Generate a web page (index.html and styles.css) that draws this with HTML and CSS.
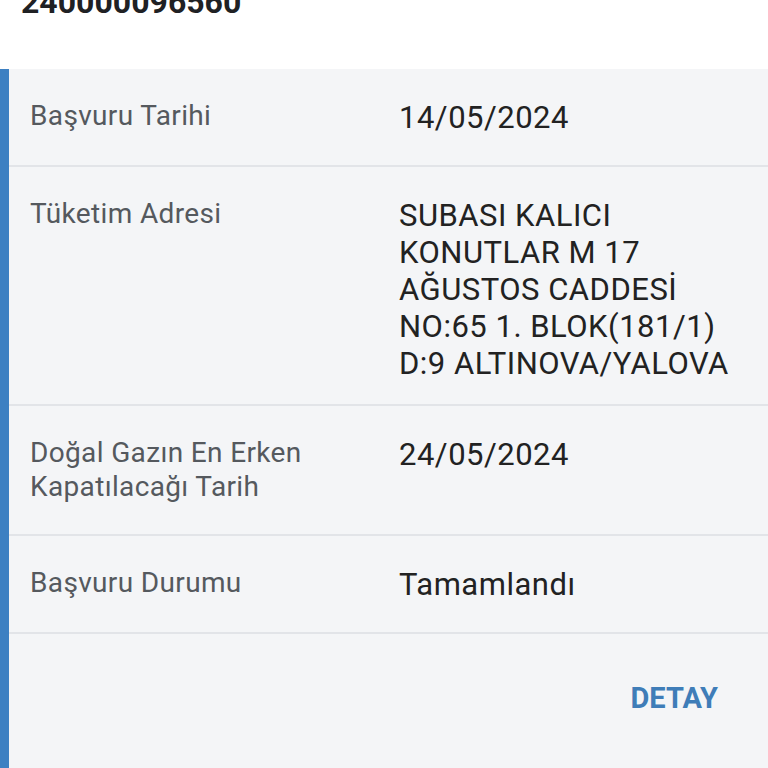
FILE: index.html
```html
<!DOCTYPE html>
<html lang="tr">
<head>
    <meta charset="UTF-8">
    <meta name="viewport" content="width=device-width, initial-scale=1.0">
    <title>Başvuru Detayı</title>
    <link rel="stylesheet" href="styles.css">
</head>
<body>
    <div class="header">
        <div class="app-no">240000096560</div>
    </div>

    <div class="card">
        <!-- başvuru bilgileri -->
        <div class="row">
            <div class="label">Başvuru Tarihi</div>
            <div class="value">14/05/2024</div>
        </div>
        <div class="row">
            <div class="label">Tüketim Adresi</div>
            <div class="value">SUBASI KALICI KONUTLAR M 17 AĞUSTOS CADDESİ NO:65 1. BLOK(181/1) D:9 ALTINOVA/YALOVA</div>
        </div>
        <div class="row">
            <div class="label">Doğal Gazın En Erken Kapatılacağı Tarih</div>
            <div class="value">24/05/2024</div>
        </div>
        <div class="row">
            <div class="label">Başvuru Durumu</div>
            <div class="value">Tamamlandı</div>
        </div>

        <div class="card-footer">
            <a class="detail-btn" href="#">DETAY</a>
        </div>
    </div>
</body>
</html>
```

FILE: styles.css
```css
:root {
    --primary-color: #3d80c2;
    --card-bg: #f4f5f7;
    --line-color: #e2e4e8;
}

* {
    box-sizing: border-box;
    margin: 0;
    padding: 0;
}

body {
    font-family: Roboto, 'Noto Sans', sans-serif;
    background: white;
    color: #222;
}

.header {
    height: 69px;
    overflow: hidden;
    padding-left: 21px;
}

.app-no {
    font-size: 32px;
    font-weight: 700;
    line-height: 32px;
    margin-top: -14px;
    color: #202124;
}

.card {
    background: var(--card-bg);
    border-left: 9px solid var(--primary-color);
    min-height: 699px;
}

.row {
    display: grid;
    grid-template-columns: 369px 1fr;
    min-height: 98px;
    padding: 30px 20px 22px 21px;
    border-bottom: 2px solid var(--line-color);
}

.label {
    font-size: 28px;
    line-height: 34px;
    letter-spacing: 0.35px;
    color: #55595e;
    padding-right: 20px;
    margin-bottom: 8px;
}

.value {
    font-size: 31px;
    line-height: 37px;
    letter-spacing: 0.5px;
    color: #222;
}

.card-footer {
    display: flex;
    justify-content: flex-end;
    padding: 48px 50px 48px 0;
}

.detail-btn {
    font-size: 29px;
    font-weight: 700;
    line-height: 32px;
    color: #3f7db8;
    text-decoration: none;
}
```
